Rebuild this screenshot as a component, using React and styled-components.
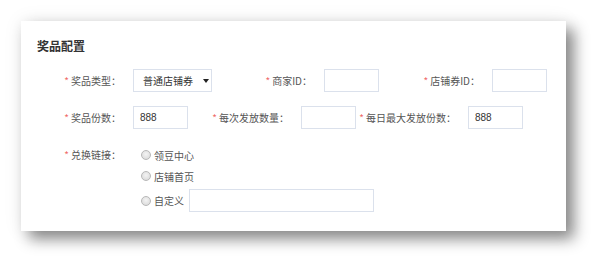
import styled, { createGlobalStyle } from 'styled-components'

const GlobalStyle = createGlobalStyle`
    body {
        margin: 0;
        background: #ffffff;
        font-family: "Noto Sans CJK SC", "Liberation Sans", sans-serif;
    }
`

const Page = () => {
    return (
    <Wrap>
        <GlobalStyle />
        <Card>
            <Title>奖品配置</Title>

            <Row>
                <Label w={84}>奖品类型：</Label>
                <Select>普通店铺券<Arrow /></Select>
                <Label w={100}>商家ID：</Label>
                <Input w={55} />
                <Label w={101}>店铺券ID：</Label>
                <Input w={55} />
            </Row>

            <Row>
                <Label w={84}>奖品份数：</Label>
                <Input w={55}>888</Input>
                <Label w={101}>每次发放数量：</Label>
                <Input w={55} />
                <Label w={100}>每日最大发放份数：</Label>
                <Input w={55}>888</Input>
            </Row>

            <LinkRow>
                <Label w={84}>兑换链接：</Label>
                <Radios>
                    <RadioLine><Radio />领豆中心</RadioLine>
                    <RadioLine><Radio />店铺首页</RadioLine>
                    <RadioLine><Radio />自定义<Input w={185} gap={5} /></RadioLine>
                </Radios>
            </LinkRow>
        </Card>
    </Wrap>
  );
}

const Wrap = styled.div`
    width: 608px;
    height: 273px;
    padding: 21px 0 0 21px;
    box-sizing: border-box;
`

const Card = styled.div`
    width: 545px;
    height: 210px;
    box-sizing: border-box;
    background: #fff;
    padding: 17px 16px 0 16px;
    box-shadow: 8px 8px 14px rgba(0, 0, 0, 0.45), 0 0 18px rgba(0, 0, 0, 0.08);
`

const Title = styled.div`
    font-size: 12px;
    font-weight: bold;
    color: #333;
    line-height: 16px;
    margin-bottom: 15px;
`

const Row = styled.div`
    display: flex;
    align-items: center;
    height: 23px;
    margin-bottom: 14px;
`

const LinkRow = styled.div`
    display: flex;
    align-items: flex-start;
    margin-top: 18px;
`

const Label = styled.div`
    width: ${p => p.w}px;
    flex: none;
    text-align: right;
    padding-right: 12px;
    box-sizing: content-box;
    font-size: 10px;
    line-height: 16px;
    color: #555;
    white-space: nowrap;
    &::before {
        content: '*';
        color: #f06a6a;
        margin-right: 2px;
    }
`

const Input = styled.div`
    width: ${p => p.w}px;
    height: 23px;
    flex: none;
    box-sizing: border-box;
    margin-left: ${p => p.gap || 0}px;
    border: 1px solid #dbe1ec;
    background: #fff;
    font-size: 10px;
    color: #333;
    line-height: 21px;
    padding-left: 6px;
    font-family: "Liberation Sans", sans-serif;
`

const Select = styled.div`
    width: 79px;
    height: 23px;
    flex: none;
    box-sizing: border-box;
    border: 1px solid #dbe1ec;
    display: flex;
    align-items: center;
    padding: 0 0 0 9px;
    font-size: 10px;
    color: #333;
    white-space: nowrap;
`

const Arrow = styled.span`
    width: 0;
    height: 0;
    margin-left: 10px;
    border-left: 3px solid transparent;
    border-right: 3px solid transparent;
    border-top: 4px solid #222;
`

const Radios = styled.div`
    display: flex;
    flex-direction: column;
    gap: 5px;
    padding-left: 8px;
`

const RadioLine = styled.div`
    display: flex;
    align-items: center;
    min-height: 16px;
    font-size: 10px;
    color: #555;
`

const Radio = styled.span`
    width: 8px;
    height: 8px;
    border-radius: 50%;
    border: 1px solid #b8b8b8;
    background: radial-gradient(circle at 50% 40%, #f4f4f4, #d6d6d6);
    margin-right: 3px;
    flex: none;
`

export default Page;
